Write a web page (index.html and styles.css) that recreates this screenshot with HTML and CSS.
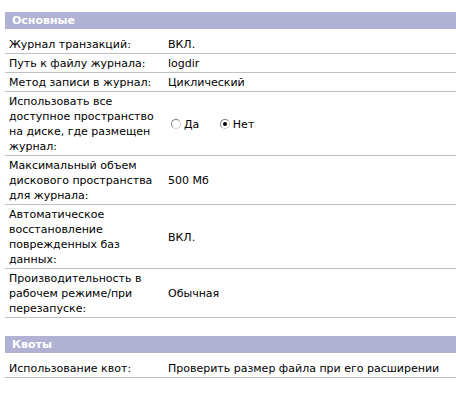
FILE: index.html
```html
<!DOCTYPE html>
<html>
    <head>
        <meta charset="utf-8">
        <link rel="stylesheet" href="styles.css">
    </head>
    <body>
        <div id="page">
            <div class="section">
                <div class="section-title">Основные</div>
                <table class="props">
                    <tr><td class="name">Журнал транзакций:</td><td class="val">ВКЛ.</td></tr>
                    <tr><td class="name">Путь к файлу журнала:</td><td class="val">logdir</td></tr>
                    <tr><td class="name">Метод записи в журнал:</td><td class="val">Циклический</td></tr>
                    <tr>
                        <td class="name">Использовать все доступное пространство на диске, где размещен журнал:</td>
                        <td class="val">
                            <span class="radio"></span><span class="radio-label">Да</span>
                            <span class="radio checked"></span><span class="radio-label">Нет</span>
                        </td>
                    </tr>
                    <tr><td class="name">Максимальный объем дискового пространства для журнала:</td><td class="val">500 Мб</td></tr>
                    <tr><td class="name">Автоматическое восстановление поврежденных баз данных:</td><td class="val">ВКЛ.</td></tr>
                    <tr><td class="name">Производительность в рабочем режиме/при перезапуске:</td><td class="val">Обычная</td></tr>
                </table>
            </div>
            <div class="section">
                <div class="section-title">Квоты</div>
                <table class="props">
                    <tr><td class="name">Использование квот:</td><td class="val">Проверить размер файла при его расширении</td></tr>
                </table>
            </div>
        </div>
    </body>
</html>
```
FILE: styles.css
```css
body{
    margin:0;
    background-color:#fff;
    color:#000;
    font-family:"DejaVu Sans", Verdana, sans-serif;
    font-size:11px;
}

#page{
    padding:12px 0 0 5px;
}

.section{
    margin-bottom:18px;
}

.section-title{
    background-color:#b1b1d3;
    color:#fff;
    font-weight:bold;
    height:17px;
    line-height:17px;
    padding-left:7px;
    margin-bottom:6px;
}

.props{
    width:100%;
    border-collapse:collapse;
}

.props td{
    border-bottom:1px solid #c0c0c0;
    padding:2px 0 1px 4px;
    line-height:15px;
    vertical-align:middle;
}

.props td.name{
    width:155px;
}

.radio{
    display:inline-block;
    box-sizing:border-box;
    width:10px;
    height:10px;
    border-radius:50%;
    border:1px solid #808080;
    border-right-color:#d4d0c8;
    border-bottom-color:#d4d0c8;
    background-color:#fff;
    vertical-align:-1px;
    margin:0 3px 0 3px;
    position:relative;
}

.radio.checked::after{
    content:"";
    position:absolute;
    left:2px;
    top:2px;
    width:4px;
    height:4px;
    border-radius:50%;
    background-color:#000;
}

.radio-label{
    margin-right:14px;
}
```
